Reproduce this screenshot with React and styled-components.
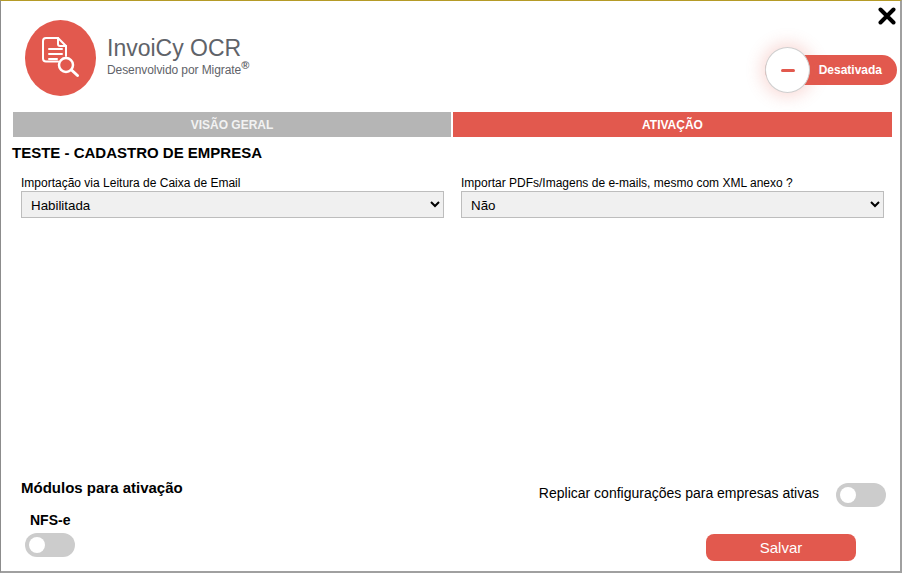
import React from 'react'
import styled, { createGlobalStyle } from 'styled-components'

const Global = createGlobalStyle`
  html, body {
    margin: 0;
    padding: 0;
    background: #fff;
  }
  * {
    box-sizing: border-box;
  }
`

function DocSearchIcon() {
  return (
    <svg width="40" height="42" viewBox="0 0 40 42" fill="none" stroke="#fff" strokeWidth="2" strokeLinecap="round" strokeLinejoin="round">
      <path d="M17 24.500H5a3 3 0 0 1-3-3V4a3 3 0 0 1 3-3h12l8 8v10" />
      <path d="M17 1v6a2 2 0 0 0 2 2h6" />
      <path d="M8 12h13M8 17h13M8 22h8" />
      <circle cx="25" cy="28" r="7" fill="#e2594e" strokeWidth="2.500" />
      <path d="M30.500 33l6 5.500" strokeWidth="3" />
    </svg>
  )
}

function CloseIcon() {
  return (
    <svg width="18" height="18" viewBox="0 0 18 18" stroke="#000" strokeWidth="4" strokeLinecap="round">
      <path d="M2.500 2.500l13 13M15.500 2.500l-13 13" />
    </svg>
  )
}

export default function App() {
  return (
    <>
      <Global />
      <Modal>
        <Header>
          <LogoCircle><DocSearchIcon /></LogoCircle>
          <Titles>
            <Title>InvoiCy OCR</Title>
            <Subtitle>Desenvolvido por Migrate<Reg>®</Reg></Subtitle>
          </Titles>
          <StatusSwitch>
            <StatusKnob><Minus /></StatusKnob>
            <StatusLabel>Desativada</StatusLabel>
          </StatusSwitch>
          <CloseButton><CloseIcon /></CloseButton>
        </Header>

        <Tabs>
          <Tab>VISÃO GERAL</Tab>
          <Tab active>ATIVAÇÃO</Tab>
        </Tabs>

        <CompanyName>TESTE - CADASTRO DE EMPRESA</CompanyName>

        <Fields>
          <Field>
            <FieldLabel>Importação via Leitura de Caixa de Email</FieldLabel>
            <Select defaultValue="Habilitada">
              <option>Habilitada</option>
              <option>Desabilitada</option>
            </Select>
          </Field>
          <Field>
            <FieldLabel>Importar PDFs/Imagens de e-mails, mesmo com XML anexo ?</FieldLabel>
            <Select defaultValue="Não">
              <option>Não</option>
              <option>Sim</option>
            </Select>
          </Field>
        </Fields>

        <Footer>
          <Modules>
            <ModulesTitle>Módulos para ativação</ModulesTitle>
            <ModuleName>NFS-e</ModuleName>
            <Toggle />
          </Modules>
          <Actions>
            <ReplicateRow>
              <ReplicateLabel>Replicar configurações para empresas ativas</ReplicateLabel>
              <Toggle />
            </ReplicateRow>
            <SaveButton>Salvar</SaveButton>
          </Actions>
        </Footer>
      </Modal>
    </>
  )
}

const Modal = styled.div`
  width: 902px;
  height: 573px;
  display: flex;
  flex-direction: column;
  border-top: 1px solid #b59b27;
  border-left: 1px solid #8c8c8c;
  border-right: 2px solid #a0a0a0;
  border-bottom: 2px solid #a0a0a0;
  background: #fff;
  font-family: "Liberation Sans", Arial, sans-serif;
  color: #000;
`

const Header = styled.div`
  position: relative;
  height: 110px;
  display: flex;
  align-items: flex-start;
  padding: 19px 3px 0 24px;
`

const LogoCircle = styled.div`
  width: 71px;
  height: 76px;
  border-radius: 50%;
  background: #e2594e;
  display: flex;
  align-items: center;
  justify-content: center;
`

const Titles = styled.div`
  margin: 15px 0 0 11px;
  display: flex;
  flex-direction: column;
  flex: 1;
`

const Title = styled.div`
  font-size: 23px;
  line-height: 26px;
  color: #5f6369;
`

const Subtitle = styled.div`
  font-size: 12px;
  line-height: 14px;
  margin-top: 2px;
  letter-spacing: -0.08px;
  color: #5f6369;
`

const Reg = styled.sup`
  font-size: 11px;
  font-weight: 700;
  line-height: 0;
`

const StatusSwitch = styled.div`
  position: relative;
  width: 132px;
  height: 30px;
  margin-top: 35px;
  border-radius: 15px;
  background: #e2594e;
  display: flex;
  align-items: center;
  justify-content: flex-end;
  padding-right: 15px;
`

const StatusKnob = styled.div`
  position: absolute;
  left: 0;
  top: -8px;
  width: 45px;
  height: 46px;
  border-radius: 50%;
  background: #fff;
  border: 1px solid #cfcfcf;
  box-shadow: 0 0 16px 4px rgba(226, 89, 78, 0.22);
  display: flex;
  align-items: center;
  justify-content: center;
`

const Minus = styled.span`
  display: block;
  width: 14px;
  height: 3px;
  border-radius: 2px;
  background: #e2594e;
`

const StatusLabel = styled.span`
  font-size: 12px;
  font-weight: 700;
  color: #fff;
`

const CloseButton = styled.div`
  position: absolute;
  top: 6px;
  right: 4px;
  line-height: 0;
`

const Tabs = styled.div`
  display: grid;
  grid-template-columns: 438px 439px;
  column-gap: 2px;
  height: 25px;
  margin: 1px 0 0 12px;
`

const Tab = styled.div`
  display: flex;
  align-items: center;
  justify-content: center;
  font-size: 12px;
  font-weight: 700;
  color: ${p => (p.active ? '#fff' : '#f2f2f2')};
  background: ${p => (p.active ? '#e2594e' : '#b5b5b5')};
`

const CompanyName = styled.div`
  margin: 8px 0 0 11px;
  font-size: 15px;
  line-height: 16px;
  font-weight: 700;
`

const Fields = styled.div`
  display: grid;
  grid-template-columns: 423px 423px;
  column-gap: 17px;
  margin: 14px 0 0 20px;
`

const Field = styled.div`
  display: flex;
  flex-direction: column;
`

const FieldLabel = styled.label`
  font-size: 12px;
  line-height: 16px;
`

const Select = styled.select`
  height: 27px;
  width: 100%;
  padding: 1px 0 0 5px;
  font-family: inherit;
  font-size: 13.33px;
  color: #000;
  background-color: #f0f0f0;
  border: 1px solid #bdbdbd;
  border-radius: 0;
`

const Footer = styled.div`
  margin-top: auto;
  display: flex;
  justify-content: space-between;
  align-items: flex-end;
  padding: 0 14px 10px 20px;
`

const Modules = styled.div`
  display: flex;
  flex-direction: column;
  align-items: flex-start;
  margin-bottom: 4px;
`

const ModulesTitle = styled.div`
  font-size: 15px;
  line-height: 16px;
  font-weight: 700;
`

const ModuleName = styled.div`
  margin: 17px 0 0 9px;
  font-size: 14px;
  line-height: 15px;
  font-weight: 700;
`

const Toggle = styled.div`
  position: relative;
  width: 50px;
  height: 24px;
  margin: 5px 0 0 4px;
  border-radius: 12px;
  background: #cccccc;

  &::before {
    content: "";
    position: absolute;
    left: 4px;
    top: 4px;
    width: 16px;
    height: 16px;
    border-radius: 50%;
    background: #fff;
  }
`

const Actions = styled.div`
  display: flex;
  flex-direction: column;
  align-items: flex-end;
`

const ReplicateRow = styled.div`
  display: flex;
  align-items: flex-start;

  ${Toggle} {
    margin: 3px 0 0 17px;
  }
`

const ReplicateLabel = styled.span`
  font-size: 14px;
  line-height: 16px;
  margin-top: 5px;
`

const SaveButton = styled.button`
  width: 150px;
  height: 27px;
  margin: 27px 30px 0 0;
  border: none;
  border-radius: 8px;
  background: #e2594e;
  color: #fff;
  font-family: inherit;
  font-size: 15px;
`
